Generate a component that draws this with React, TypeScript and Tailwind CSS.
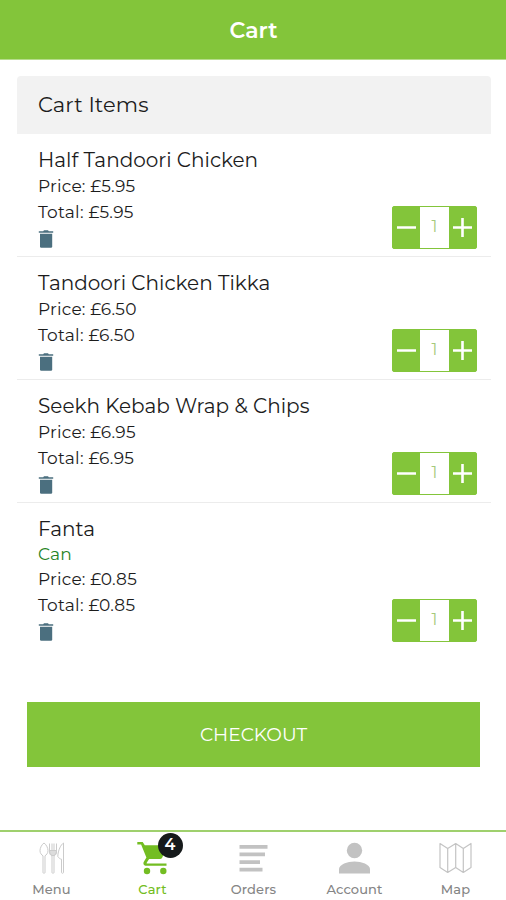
import React, { useState } from "react";

type CartItem = {
  id: number;
  name: string;
  option?: string;
  price: number;
  quantity: number;
};

const INITIAL_ITEMS: CartItem[] = [
  { id: 1, name: "Half Tandoori Chicken", price: 5.95, quantity: 1 },
  { id: 2, name: "Tandoori Chicken Tikka", price: 6.5, quantity: 1 },
  { id: 3, name: "Seekh Kebab Wrap & Chips", price: 6.95, quantity: 1 },
  { id: 4, name: "Fanta", option: "Can", price: 0.85, quantity: 1 },
];

const TrashIcon = () => (
  <svg width="16" height="20" viewBox="0 0 16 20" fill="#4b6f7f">
    <path d="M.8 2.2h4.4L6 1.200h4l.8 1h4.400v1.500H.8z" />
    <path d="M2 4.800h12.200V17.600a1.200 1.200 0 0 1-1.200 1.200H3.200A1.200 1.200 0 0 1 2 17.600z" />
  </svg>
);

const MenuIcon = () => (
  <svg
    width="26"
    height="32"
    viewBox="0 0 26 32"
    fill="none"
    stroke="#cbcbcb"
    strokeWidth="1"
  >
    <path d="M5 1C3 2.200 1 5.800 1 8.600c0 2.600 1.500 4.300 3 5.200V30.500c0 1 2 1 2 0V13.800c1.500-.9 3-2.600 3-5.200C9 5.800 7 2.200 5 1z" />
    <path d="M10.500 1.500v8c0 2.600 1.200 3.800 2.500 4.500v16.500c0 1 2 1 2 0V14c1.300-.7 2.500-1.900 2.500-4.500v-8M13 1.500V9M15 1.500V9" />
    <path fill="#dcdcdc" d="M10.500 8.500h7c0 3-1.200 4.500-2.500 5h-2c-1.300-.5-2.500-2-2.500-5z" />
    <path d="M24.500 1C22 2.500 19 8 18.800 14.500c1.200 1.800 2.400 2.500 3.700 2.700V30.500c0 1 2 1 2 0z" />
  </svg>
);

const CartIcon = () => (
  <svg width="32" height="34" viewBox=".5 0 32 34" fill="#73bd22">
    <path d="M.8 1h5.400l2.100 3.200H31l-5.200 12.300a2.800 2.800 0 0 1-2.500 1.500H12.600l-2.400 3.700c-.2.700.1.900.7.900H30v2.200H10c-2.700 0-3.900-2.300-2.500-4.400l2.400-4L4.600 3.600H.8z" />
    <circle cx="10.500" cy="30" r="3.200" />
    <circle cx="26.800" cy="30" r="3.200" />
  </svg>
);

const OrdersIcon = () => (
  <svg width="29" height="28" viewBox="0 0 29 28" fill="#c2c2c2">
    <path d="M.5 1h28v3.700H.5zM.5 8.600h25.500v3.700H.5zM.5 16.200H21v3.700H.5zM.5 23.800h23v3.700H.5z" />
  </svg>
);

const AccountIcon = () => (
  <svg width="31" height="32" viewBox="0 0 31 32" fill="#c2c2c2">
    <circle cx="15.500" cy="8.500" r="7.700" />
    <path d="M0 31.500V27c0-4.500 8.500-7.500 15.500-7.500S31 22.500 31 27v4.500z" />
  </svg>
);

const MapIcon = () => (
  <svg
    width="33"
    height="32"
    viewBox="0 0 33 32"
    fill="none"
    stroke="#c4c4c4"
    strokeWidth="1.200"
    strokeLinejoin="round"
  >
    <path d="M1 1.500l7.700 5 8-5 7.600 5 7.700-5v24l-7.700 5-7.600-5-8 5-7.700-5zM8.700 6.500v24M16.700 1.500v24M24.300 6.500v24" />
  </svg>
);

const TABS = [
  { label: "Menu", icon: <MenuIcon /> },
  { label: "Cart", icon: <CartIcon /> },
  { label: "Orders", icon: <OrdersIcon /> },
  { label: "Account", icon: <AccountIcon /> },
  { label: "Map", icon: <MapIcon /> },
];

type StepperProps = {
  quantity: number;
  onChange: (quantity: number) => void;
};

const QuantityStepper = ({ quantity, onChange }: StepperProps) => (
  <div className="mb-[1.5px] flex h-[43px] w-[85px] overflow-hidden rounded-[2px] border border-[#83c53a] bg-[#83c53a]">
    <button
      type="button"
      aria-label="Decrease"
      className="flex w-[27px] items-center justify-center"
      onClick={() => onChange(Math.max(1, quantity - 1))}
    >
      <svg width="19" height="19" viewBox="0 0 19 19" fill="#fff">
        <path d="M0 8.200h19v2.600H0z" />
      </svg>
    </button>
    <span className="flex w-[29px] items-center justify-center bg-white text-[16px] text-[#a4c97c]">
      {quantity}
    </span>
    <button
      type="button"
      aria-label="Increase"
      className="flex w-[27px] items-center justify-center"
      onClick={() => onChange(quantity + 1)}
    >
      <svg width="19" height="19" viewBox="0 0 19 19" fill="#fff">
        <path d="M0 8.200h8.200V0h2.600v8.200H19v2.600h-8.200V19H8.200v-8.200H0z" />
      </svg>
    </button>
  </div>
);

const App = () => {
  const [items, setItems] = useState(INITIAL_ITEMS);
  const [activeTab, setActiveTab] = useState("Cart");

  const handleQuantityChange = (id: number, quantity: number) => {
    setItems(items.map((item) => (item.id === id ? { ...item, quantity } : item)));
  };

  const handleDelete = (id: number) => {
    setItems(items.filter((item) => item.id !== id));
  };

  return (
    <div className="flex h-[900px] w-[506px] flex-col overflow-hidden bg-white font-['Montserrat','Inter',sans-serif] text-[#1c1c1c]">
      <header className="flex h-[60px] shrink-0 items-center justify-center border-b border-[#b6dc8c] bg-[#83c53a] pt-[2px] pl-[1px]">
        <h1 className="text-[22px] font-semibold text-white">Cart</h1>
      </header>

      <main className="flex-1 pt-[16px] pr-[15px] pl-[17px]">
        <h2 className="flex h-[58px] items-center rounded-t-[4px] bg-[#f2f2f2] pl-[21px] text-[21px] tracking-[0.1px]">
          Cart Items
        </h2>

        <ul>
          {items.map((item) => (
            <li
              key={item.id}
              className="flex items-end justify-between border-b border-[#ececec] pt-[12px] pr-[14px] pb-[6px] pl-[21px] last:border-b-0"
            >
              <div>
                <h3 className="h-[27px] text-[20px] leading-[28px] whitespace-nowrap">
                  {item.name}
                </h3>
                {item.option && (
                  <p className="h-[24px] text-[17px] leading-[25px] tracking-[0.2px] text-[#258325]">
                    {item.option}
                  </p>
                )}
                <p className="h-[25px] text-[17px] leading-[27px] tracking-[0.22px]">
                  Price: £{item.price.toFixed(2)}
                </p>
                <p className="h-[26px] text-[17px] leading-[28px] tracking-[0.26px]">
                  Total: £{(item.price * item.quantity).toFixed(2)}
                </p>
                <button
                  type="button"
                  aria-label="Delete"
                  className="flex h-[26px] items-end pb-[1px]"
                  onClick={() => handleDelete(item.id)}
                >
                  <TrashIcon />
                </button>
              </div>
              <QuantityStepper
                quantity={item.quantity}
                onChange={(quantity) => handleQuantityChange(item.id, quantity)}
              />
            </li>
          ))}
        </ul>

        <button
          type="button"
          className="mt-[53px] ml-[10px] flex h-[65px] w-[453px] items-center justify-center bg-[#83c53a] text-[18.600px] text-white"
        >
          CHECKOUT
        </button>
      </main>

      <nav className="grid h-[70px] shrink-0 grid-cols-5 border-t-2 border-[#9fd06d] pl-[1px]">
        {TABS.map((tab) => (
          <button
            key={tab.label}
            type="button"
            className={`flex flex-col items-center text-[13px] font-medium ${
              activeTab === tab.label ? "text-[#73bd22]" : "text-[#858585]"
            }`}
            onClick={() => setActiveTab(tab.label)}
          >
            <span className="relative flex h-[46px] items-center justify-center pt-[6px]">
              {tab.icon}
              {tab.label === "Cart" && (
                <span className="absolute top-[0.5px] left-[21px] flex h-[25px] w-[25px] items-center justify-center rounded-full bg-[#161a1b] text-[16px] font-semibold text-white">
                  {items.length}
                </span>
              )}
            </span>
            <span className="leading-[22px] tracking-[0.1px]">{tab.label}</span>
          </button>
        ))}
      </nav>
    </div>
  );
};

export default App;
